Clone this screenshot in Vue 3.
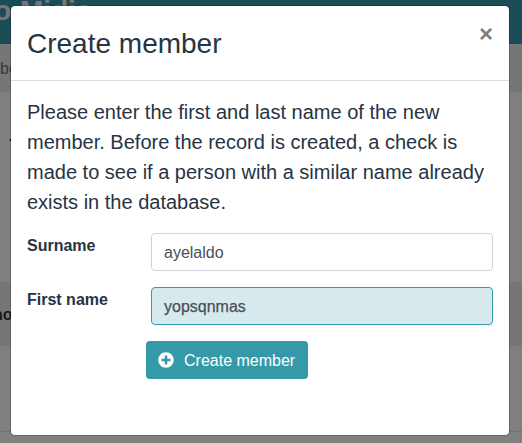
<script setup>
import { ref } from 'vue'

const surname = ref('ayelaldo')
const firstName = ref('yopsqnmas')
</script>

<template>
  <div class="screen">
    <div class="page">
      <header class="brand"><span>o Midia</span></header>
      <nav class="crumbs"><span>be</span></nav>
      <div class="content"><span>.</span></div>
      <div class="table-head"><span>no</span></div>
      <div class="table-row"></div>
    </div>
    <div class="backdrop">
      <section class="modal" role="dialog">
        <div class="modal-header">
          <h5>Create member</h5>
          <button class="close" type="button">×</button>
        </div>
        <div class="modal-body">
          <p>Please enter the first and last name of the new member. Before the record is created, a check is made to see if a person with a similar name already exists in the database.</p>
          <form @submit.prevent>
            <div class="row">
              <label for="surname">Surname</label>
              <input id="surname" v-model="surname" type="text" spellcheck="false" />
            </div>
            <div class="row">
              <label for="first">First name</label>
              <input id="first" v-model="firstName" class="required" type="text" spellcheck="false" />
            </div>
            <button class="submit" type="submit">
              <svg viewBox="0 0 512 512" width="16" height="16">
                <path fill="currentColor" d="M256 8C119 8 8 119 8 256s111 248 248 248 248-111 248-248S393 8 256 8zm144 276c0 6.600-5.400 12-12 12h-92v92c0 6.600-5.400 12-12 12h-56c-6.600 0-12-5.400-12-12v-92h-92c-6.600 0-12-5.400-12-12v-56c0-6.600 5.400-12 12-12h92v-92c0-6.600 5.400-12 12-12h56c6.600 0 12 5.400 12 12v92h92c6.600 0 12 5.400 12 12v56z" />
              </svg>
              <span>Create member</span>
            </button>
          </form>
        </div>
      </section>
    </div>
  </div>
</template>

<style>
body {
  overflow: hidden;
}
</style>

<style scoped>
* {
  box-sizing: border-box;
}
.screen {
  display: grid;
  width: 522px;
  height: 443px;
  overflow: hidden;
  font: 16px/24px "Liberation Sans", Arial, sans-serif;
  color: #263444;
}
.page,
.backdrop {
  grid-area: 1 / 1;
  min-width: 0;
  min-height: 0;
}
.page {
  display: flex;
  flex-direction: column;
  overflow: hidden;
  background: #fff;
  white-space: nowrap;
}
.brand {
  height: 44px;
  background: #349aaa;
  color: #f4e8ec;
  font-size: 28px;
  font-weight: 700;
  line-height: 22px;
  word-spacing: 1px;
}
.brand span {
  margin-left: -6px;
}
.crumbs {
  height: 48px;
  padding-top: 13px;
  background: #e9ecef;
  color: #6c757d;
}
.content {
  height: 190px;
  padding: 30px 0 0 8px;
  color: #000;
  font-size: 20px;
}
.table-head {
  height: 64px;
  padding-top: 21px;
  background: #ececec;
  font-weight: 700;
}
.table-head span {
  margin-left: -7px;
}
.table-row {
  height: 86px;
  border-bottom: 1px solid #dee2e6;
}
.backdrop {
  padding: 5px 12px 0 10px;
  background: rgba(0, 0, 0, 0.5);
}
.modal {
  width: 500px;
  height: 431px;
  background: #fff;
  background-clip: padding-box;
  border: 1px solid rgba(0, 0, 0, 0.2);
  border-radius: 5px;
}
.modal-header {
  display: flex;
  justify-content: space-between;
  align-items: flex-start;
  height: 75px;
  padding: 16px;
  border-bottom: 1px solid #d9dee4;
}
h5 {
  margin: 0;
  padding-top: 1px;
  font-size: 28px;
  font-weight: 400;
  line-height: 42px;
}
.close {
  padding: 0;
  border: 0;
  background: none;
  color: #7f7f7f;
  font: 700 24px/24px "Liberation Sans", Arial, sans-serif;
}
.modal-body {
  padding: 16px;
}
p {
  margin: 0 0 16px;
  font-size: 20px;
  line-height: 30px;
}
.row {
  display: grid;
  grid-template-columns: 124px 342px;
  margin-bottom: 16px;
}
label {
  padding-top: 1px;
  font-weight: 700;
}
input {
  width: 100%;
  height: 38px;
  padding: 8px 12px 6px;
  border: 1px solid #ced4da;
  border-radius: 4px;
  outline: 0;
  background: #fff;
  color: #495057;
  font: inherit;
}
input.required {
  border-color: #349aaa;
  background: #d6eaed;
  -webkit-text-stroke: 0.25px #495057;
}
.submit {
  display: flex;
  align-items: center;
  gap: 10px;
  height: 38px;
  margin-left: 119px;
  padding: 6px 13px 6px 12px;
  border: 0;
  border-radius: 4px;
  background: #349aaa;
  color: #fff;
  font: inherit;
}
.submit span {
  padding-top: 2px;
}
</style>
